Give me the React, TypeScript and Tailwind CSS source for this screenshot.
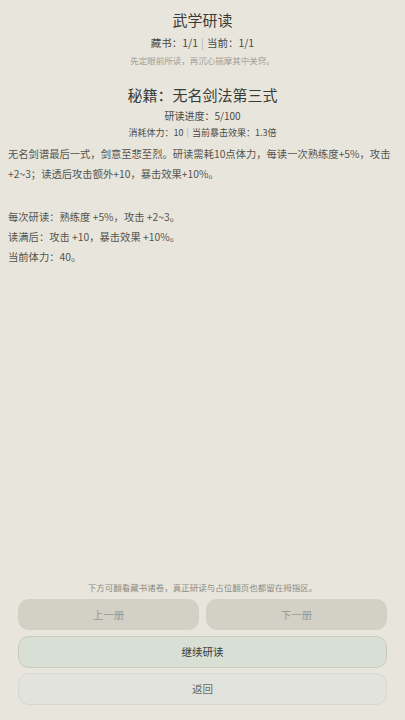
import React from "react";

export default function App() {
  return (
    <div
      className="flex h-[720px] w-full flex-col bg-[#e8e5dc] text-[#3a3a36]"
      style={{ fontFamily: '"Noto Sans CJK SC", "Noto Sans", sans-serif' }}
    >
      <div className="flex flex-col items-center pt-[9px]">
        <div className="text-[15px] leading-[22px] text-[#3a3a36]">武学研读</div>
        <div className="mt-[4px] text-[10.5px] leading-[16px] text-[#4a4a45]">
          藏书：1/1<span className="mx-[3px] text-[#b0aea5]">|</span>当前：1/1
        </div>
        <div className="mt-[2px] text-[8.5px] leading-[14px] text-[#a09e95]">
          先定眼前所读，再沉心揣摩其中关窍。
        </div>
        <div className="mt-[17px] text-[15px] leading-[22px] text-[#3a3a36]">
          秘籍：无名剑法第三式
        </div>
        <div className="mt-[1.5px] text-[10px] leading-[16px] text-[#4a4a45]">研读进度：5/100</div>
        <div className="mt-[2.5px] text-[9px] leading-[14px] text-[#4a4a45]">
          消耗体力：10<span className="mx-[3px] text-[#b0aea5]">|</span>当前暴击效果：1.3倍
        </div>
      </div>
      <div className="mt-[4px] px-[8px] text-[10.3px] leading-[20px] text-[#55554f]">
        <p>
          无名剑谱最后一式，剑意至悲至烈。研读需耗10点体力，每读一次熟练度+5%，攻击+2~3；读透后攻击额外+10，暴击效果+10%。
        </p>
        <div className="mt-[23px]">
          <p>每次研读：熟练度 +5%，攻击 +2~3。</p>
          <p>读满后：攻击 +10，暴击效果 +10%。</p>
          <p>当前体力：40。</p>
        </div>
      </div>
      <div className="mt-auto flex flex-col px-[18px] pb-[15px]">
        <div className="text-center text-[8.5px] leading-[14px] text-[#8e8c84]">
          下方可翻看藏书诸卷，真正研读与占位翻页也都留在拇指区。
        </div>
        <div className="mt-[5px] flex gap-[7px]">
          <button className="h-[31px] flex-1 rounded-[11px] bg-[#d3d0c6] text-[10.5px] text-[#9a988e]">
            上一册
          </button>
          <button className="h-[31px] flex-1 rounded-[11px] bg-[#d3d0c6] text-[10.5px] text-[#9a988e]">
            下一册
          </button>
        </div>
        <button className="mt-[6px] h-[32px] w-full rounded-[11px] border border-[#c8cabf] bg-[#d8dfd5] text-[10.5px] text-[#3a3a36]">
          继续研读
        </button>
        <button className="mt-[5px] h-[32px] w-full rounded-[11px] border border-[#d8d6ce] bg-[#e3e3de] text-[10.5px] text-[#6a6a64]">
          返回
        </button>
      </div>
    </div>
  );
}
